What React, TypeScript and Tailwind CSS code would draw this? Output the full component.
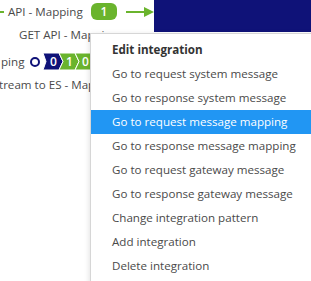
import React from "react";

const items = [
  "Go to request system message",
  "Go to response system message",
  "Go to request message mapping",
  "Go to response message mapping",
  "Go to request gateway message",
  "Go to response gateway message",
  "Change integration pattern",
  "Add integration",
  "Delete integration",
];

function Chevron({ label, color, first }: { label: string; color: string; first?: boolean }) {
  return (
    <svg width="20" height="17" viewBox="0 0 20 17" className="-mr-[4px] shrink-0">
      <polygon
        points={first ? "0,0 16,0 20,8.5 16,17 0,17 3,8.5" : "0,0 16,0 20,8.5 16,17 0,17 4,8.5"}
        fill={color}
        stroke="#fff"
        strokeWidth="1"
      />
      <text x="10.5" y="13" fontSize="12" fill="#fff" textAnchor="middle" fontFamily="Open Sans, sans-serif" fontWeight="600">
        {label}
      </text>
    </svg>
  );
}

export default function App() {
  return (
    <div className="relative w-[311px] h-[281px] overflow-hidden bg-white text-[#4a4a4a] text-[11.6px] whitespace-nowrap font-['Open_Sans',sans-serif]">
      {/* canvas */}
      <div className="flex flex-col">
        <div className="flex items-start h-[23px]">
          <div className="flex items-center h-[23px] shrink-0">
            <div className="w-[4px] h-[2px] bg-[#6ab42d]" />
            <span className="ml-[4px] w-[79px]">API - Mapping</span>
            <span className="ml-[4px] w-[26px] h-[17px] rounded-[6px] bg-[#6ab42d] text-white font-semibold text-[12px] flex items-center justify-center">1</span>
            <svg width="28" height="10" className="ml-[9px]">
              <line x1="0" y1="5" x2="20" y2="5" stroke="#6ab42d" strokeWidth="2" />
              <polygon points="18,0 28,5 18,10" fill="#6ab42d" />
            </svg>
          </div>
          <div className="shrink-0 w-[157px] h-[32px] bg-[#0f1278]" />
        </div>
        <div className="flex items-center h-[23px]">
          <span className="ml-[19px]">GET API - Mapping</span>
          <div className="ml-[4px] w-[30px] h-px bg-[#ccc]" />
        </div>
        <div className="flex items-center h-[23px] mt-[4px]">
          <span className="ml-[1px] w-[27px]">ping</span>
          <span className="ml-[2px] w-[10px] h-[10px] rounded-full border-2 border-[#0f1278]" />
          <div className="ml-[3px] flex">
            <Chevron label="0" color="#0f1278" first />
            <Chevron label="1" color="#6ab42d" />
            <Chevron label="0" color="#6ab42d" />
          </div>
        </div>
        <div className="flex items-center h-[23px]">
          <span className="-ml-[1px]">tream to ES - Mapping</span>
        </div>
      </div>

      {/* context menu */}
      <div className="absolute left-[90px] top-[33px] w-[240px] bg-white border-l border-t border-[#d6d6d6] shadow-[0_2px_6px_rgba(0,0,0,0.15)] pt-[4px] pb-[8px]">
        <div className="h-[24px] flex items-center pl-[21px] font-bold text-[#333]">Edit integration</div>
        {items.map((t, i) => (
          <div
            key={t}
            className={
              i === 2
                ? "h-[24px] flex items-center pl-[21px] bg-[#2196f3] text-white"
                : "h-[24px] flex items-center pl-[21px]"
            }
          >
            {t}
          </div>
        ))}
      </div>
    </div>
  );
}
